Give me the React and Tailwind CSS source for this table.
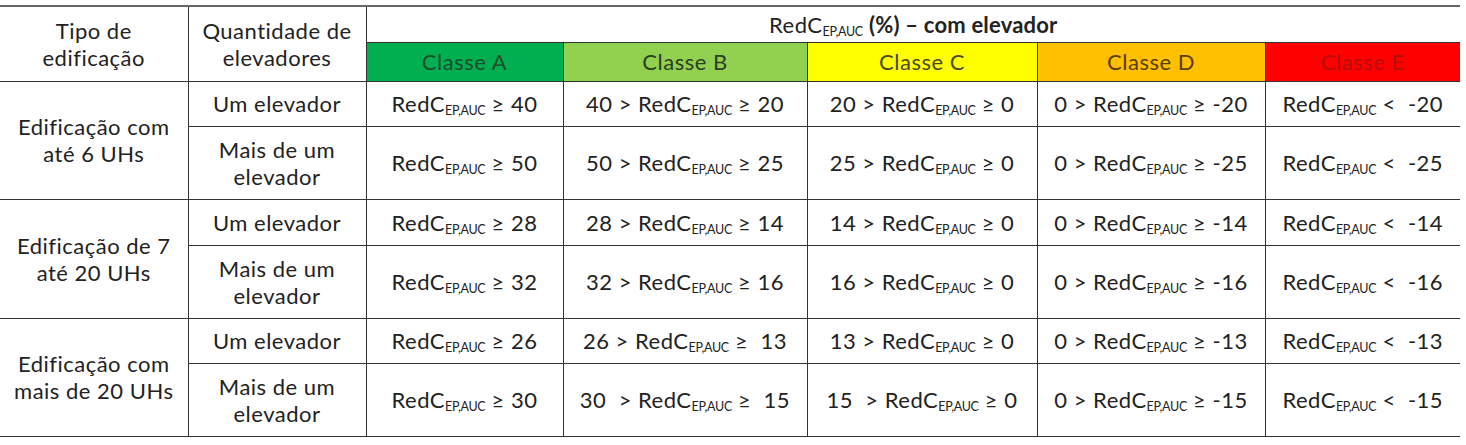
const classes = [
  { label: "Classe A", bg: "bg-[#00b050]", text: "text-[#1d4d2b]" },
  { label: "Classe B", bg: "bg-[#92d050]", text: "text-[#2c3d24]" },
  { label: "Classe C", bg: "bg-[#ffff00]", text: "text-[#4a4a28]" },
  { label: "Classe D", bg: "bg-[#ffc000]", text: "text-[#5a3d10]" },
  { label: "Classe E", bg: "bg-[#ff0000]", text: "text-[#b80d0d]" },
];

const groups = [
  {
    name: ["Edificação com", "até 6 UHs"],
    rows: [
      { qty: ["Um elevador"], a: "40", b: ["40", "20"], c: ["20", "0"], d: ["0", "-20"], e: "-20" },
      { qty: ["Mais de um", "elevador"], a: "50", b: ["50", "25"], c: ["25", "0"], d: ["0", "-25"], e: "-25" },
    ],
  },
  {
    name: ["Edificação de 7", "até 20 UHs"],
    rows: [
      { qty: ["Um elevador"], a: "28", b: ["28", "14"], c: ["14", "0"], d: ["0", "-14"], e: "-14" },
      { qty: ["Mais de um", "elevador"], a: "32", b: ["32", "16"], c: ["16", "0"], d: ["0", "-16"], e: "-16" },
    ],
  },
  {
    name: ["Edificação com", "mais de 20 UHs"],
    rows: [
      { qty: ["Um elevador"], a: "26", b: ["26", "\u00a013"], c: ["13", "0"], d: ["0", "-13"], e: "-13" },
      { qty: ["Mais de um", "elevador"], a: "30", b: ["30\u00a0", "\u00a015"], c: ["15\u00a0", "0"], d: ["0", "-15"], e: "-15" },
    ],
  },
];

function Red() {
  return (
    <>
      RedC<sub className="text-[12.5px] tracking-[-0.3px] relative top-[3px] align-baseline">EP,AUC</sub>
    </>
  );
}

function Lines({ items }) {
  return items.map((t, i) => <div key={i}>{t}</div>);
}

const cell = "border border-[#333] text-center align-middle p-0";

export default function App() {
  return (
    <div
      className="bg-white w-[1466px] h-[445px] pt-[5px] text-[#222] text-[22px] leading-[27px] tracking-[0.5px]"
      style={{ fontFamily: 'Lato, "Open Sans", sans-serif' }}
    >
      <table className="border-collapse table-fixed w-[1460px]">
        <colgroup>
          <col className="w-[188px]" />
          <col className="w-[178px]" />
          <col className="w-[197px]" />
          <col className="w-[244px]" />
          <col className="w-[230px]" />
          <col className="w-[228px]" />
          <col className="w-[195px]" />
        </colgroup>
        <thead>
          <tr className="h-[36px]">
            <th rowSpan={2} className={`${cell} border-l-0 border-t-[#666] border-t-2 font-normal`}>
              <Lines items={["Tipo de", "edificação"]} />
            </th>
            <th rowSpan={2} className={`${cell} border-t-[#666] border-t-2 font-normal`}>
              <Lines items={["Quantidade de", "elevadores"]} />
            </th>
            <th colSpan={5} className={`${cell} border-r-0 border-t-[#666] border-t-2 font-normal`}>
              <Red /> <span className="font-bold tracking-[0.2px]">(%) – com elevador</span>
            </th>
          </tr>
          <tr className="h-[39px]">
            {classes.map((c, i) => (
              <th
                key={c.label}
                className={`${cell} ${c.bg} ${c.text} font-normal ${i === 4 ? "border-r-0" : ""}`}
              >
                {c.label}
              </th>
            ))}
          </tr>
        </thead>
        <tbody>
          {groups.map((g, gi) =>
            g.rows.map((r, ri) => (
              <tr
                key={g.name[0] + ri}
                className={r.qty.length > 1 ? "h-[73px]" : gi === 1 ? "h-[46px]" : "h-[45px]"}
              >
                {ri === 0 && (
                  <td rowSpan={2} className={`${cell} border-l-0`}>
                    <Lines items={g.name} />
                  </td>
                )}
                <td className={cell}>
                  <Lines items={r.qty} />
                </td>
                <td className={cell}>
                  <Red /> ≥ {r.a}
                </td>
                <td className={cell}>
                  {r.b[0]} &gt; <Red /> ≥ {r.b[1]}
                </td>
                <td className={cell}>
                  {r.c[0]} &gt; <Red /> ≥ {r.c[1]}
                </td>
                <td className={cell}>
                  {r.d[0]} &gt; <Red /> ≥ {r.d[1]}
                </td>
                <td className={`${cell} border-r-0`}>
                  <Red /> &lt;&nbsp; {r.e}
                </td>
              </tr>
            ))
          )}
        </tbody>
      </table>
    </div>
  );
}
